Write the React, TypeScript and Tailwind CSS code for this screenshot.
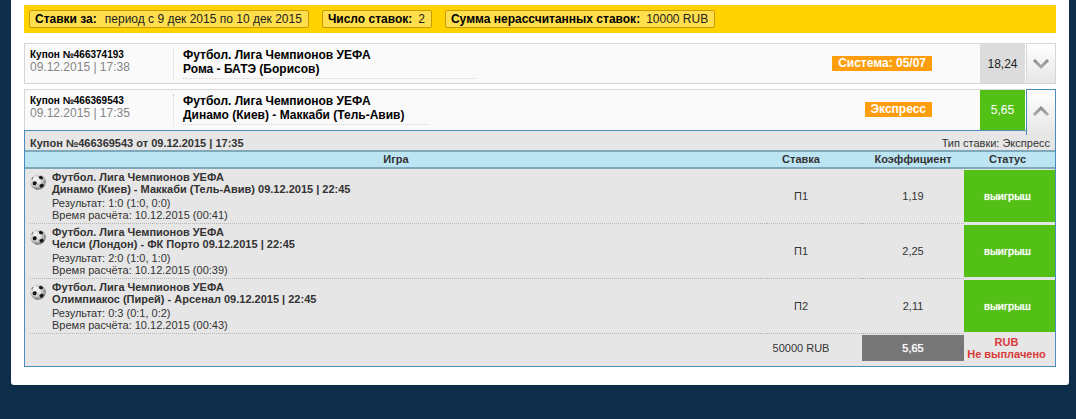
import React from 'react';

type Bet = {
  id: number;
  league: string;
  match: string;
  result: string;
  settled: string;
  pick: string;
  odds: string;
  status: string;
};

const summary = [
  { label: 'Ставки за:', value: 'период с 9 дек 2015 по 10 дек 2015', gap: 'gap-2' },
  { label: 'Число ставок:', value: '2', gap: 'gap-1.5' },
  { label: 'Сумма нерассчитанных ставок:', value: '10000 RUB', gap: 'gap-1.5' },
];

const bets: Bet[] = [
  {
    id: 1,
    league: 'Футбол. Лига Чемпионов УЕФА',
    match: 'Динамо (Киев) - Маккаби (Тель-Авив) 09.12.2015 | 22:45',
    result: 'Результат: 1:0 (1:0, 0:0)',
    settled: 'Время расчёта: 10.12.2015 (00:41)',
    pick: 'П1',
    odds: '1,19',
    status: 'выигрыш',
  },
  {
    id: 2,
    league: 'Футбол. Лига Чемпионов УЕФА',
    match: 'Челси (Лондон) - ФК Порто 09.12.2015 | 22:45',
    result: 'Результат: 2:0 (1:0, 1:0)',
    settled: 'Время расчёта: 10.12.2015 (00:39)',
    pick: 'П1',
    odds: '2,25',
    status: 'выигрыш',
  },
  {
    id: 3,
    league: 'Футбол. Лига Чемпионов УЕФА',
    match: 'Олимпиакос (Пирей) - Арсенал 09.12.2015 | 22:45',
    result: 'Результат: 0:3 (0:1, 0:2)',
    settled: 'Время расчёта: 10.12.2015 (00:43)',
    pick: 'П2',
    odds: '2,11',
    status: 'выигрыш',
  },
];

const BallIcon: React.FC = () => (
  <svg width="16" height="16" viewBox="0 0 16 16" className="mt-[3px] shrink-0" aria-hidden="true">
    <defs>
      <radialGradient id="ball" cx="0.4" cy="0.36" r="0.68">
        <stop offset="0" stopColor="#ffffff" />
        <stop offset="0.55" stopColor="#d8d8d8" />
        <stop offset="1" stopColor="#6e6e6e" />
      </radialGradient>
    </defs>
    <circle cx="8" cy="8" r="7.8" fill="url(#ball)" />
    <path
      d="M8.9 4.4 6 7.4M6.7 9.8l2.9 1.6M12 5.8 12.2 9.8M4 11.2 5 14M9.8 13 8 14.6M3.4 7.6 2.2 5.4M8.8 2.8 5.8 1.4"
      stroke="#a3a3a3"
      strokeWidth="0.6"
      fill="none"
    />
    <g fill="#161616">
      <path d="M8.7 2.6 11 1.8 13.2 3.4 12.4 5.6 9.6 5Z" />
      <path d="M2.6 8.2 5.2 7 7 8.8 5.8 11.3 3 11Z" />
      <path d="M9.4 11 12 9.6 13.8 11 12.8 13.2 10.2 13.6Z" />
    </g>
    <path d="M1 5.6 2.2 3.4 3.6 2.4 2.8 4.8ZM5 14 7.6 14.4 8.2 15.6 5.8 15.2ZM14.4 6 15.4 7 15.4 8.8 14.6 8Z" fill="#6a6a6a" />
  </svg>
);

const Chevron: React.FC<{ open: boolean }> = ({ open }) => (
  <svg width="18" height="12" viewBox="0 0 18 12" fill="none" aria-hidden="true">
    <defs>
      <linearGradient id="chevron" x1="0" y1="0" x2="0" y2="12" gradientUnits="userSpaceOnUse">
        <stop offset="0" stopColor="#858585" />
        <stop offset="1" stopColor="#b4b4b4" />
      </linearGradient>
    </defs>
    <path
      d={open ? 'M2 10 9 3 16 10' : 'M2 2 9 9 16 2'}
      stroke="url(#chevron)"
      strokeWidth="3"
    />
  </svg>
);

type CouponRowProps = {
  number: string;
  date: string;
  league: string;
  match: string;
  type: string;
  odds: string;
  open: boolean;
};

const CouponRow: React.FC<CouponRowProps> = ({ number, date, league, match, type, odds, open }) => (
  <div className={`flex h-[41px] ${open ? '' : 'border-b border-[#d6d6d6]'}`}>
    <div className="flex flex-1 items-stretch border-t border-l border-[#d6d6d6] bg-[#fafafa]">
      <div className="my-1 w-[149px] shrink-0 border-r border-dotted border-[#d4d4d4] pt-px pl-[5px]">
        <p className="text-[10px] leading-3 font-bold text-black">Купон №{number}</p>
        <p className="text-xs leading-3 text-[#858585]">{date}</p>
      </div>
      <div className="pt-1 pl-[9px]">
        <div
          className={`border-b border-dotted border-[#d4d4d4] pb-0.5 text-xs leading-[14px] font-bold text-black ${
            open ? 'w-[245px]' : 'w-[293px]'
          }`}
        >
          <p>{league}</p>
          <p>{match}</p>
        </div>
      </div>
      <div className="mr-12 ml-auto pt-3">
        <span className="block bg-[#ff9e0d] px-1.5 text-xs leading-[15px] font-bold text-white">{type}</span>
      </div>
      <div
        className={`flex w-[45px] items-center justify-center text-xs ${
          open ? 'bg-[#53c015] text-white' : 'bg-[#dcdcdc] text-[#222]'
        }`}
      >
        {odds}
      </div>
    </div>
    <button
      type="button"
      aria-expanded={open}
      aria-label={`Купон №${number}`}
      className={`ml-px flex w-[30px] shrink-0 items-center justify-center border-x border-t bg-linear-to-b from-white to-[#e6e6e6] ${
        open ? 'relative z-10 h-[46px] border-[#4b8dbb] pb-1' : 'border-[#d6d6d6]'
      }`}
    >
      <Chevron open={open} />
    </button>
  </div>
);

const CouponDetails: React.FC = () => (
  <div className="border border-[#4b8dbb] bg-[#e6e6e6] text-[11px] leading-3 text-[#333]">
    <div className="flex h-[19px] items-end justify-between px-[5px] pb-px">
      <h2 className="font-bold">Купон №466369543 от 09.12.2015 | 17:35</h2>
      <p>Тип ставки: Экспресс</p>
    </div>
    <table className="w-full table-fixed border-separate border-spacing-0">
      <colgroup>
        <col />
        <col className="w-[95px]" />
        <col className="w-[102px]" />
        <col className="w-[91px]" />
      </colgroup>
      <thead>
        <tr className="bg-[#bde4f3] leading-[15px]">
          <th className="border-y-2 border-[#7fa9ba] p-0">Игра</th>
          <th className="border-y-2 border-[#7fa9ba] p-0 pr-[27px]">Ставка</th>
          <th className="border-y-2 border-[#7fa9ba] p-0">Коэффициент</th>
          <th className="border-y-2 border-[#7fa9ba] p-0 pr-1">Статус</th>
        </tr>
      </thead>
      <tbody>
        {bets.map((bet) => (
          <tr key={bet.id} className="text-center">
            <td className="p-0 pl-[5px] text-left">
              <div className="flex gap-1.5 border-b border-dotted border-[#b5b5b5] py-0.5">
                <BallIcon />
                <div>
                  <p className="font-bold">{bet.league}</p>
                  <p className="mb-0.5 font-bold">{bet.match}</p>
                  <p>{bet.result}</p>
                  <p>{bet.settled}</p>
                </div>
              </div>
            </td>
            <td className="border-b border-dotted border-[#b5b5b5] p-0 pr-[27px]">{bet.pick}</td>
            <td className="border-b border-dotted border-[#b5b5b5] p-0">{bet.odds}</td>
            <td className="p-0 align-top">
              <div className="mt-px flex h-[52px] items-center justify-center bg-[#53c015] pr-1 text-white text-shadow-[0_0_1px_#fff]">
                {bet.status}
              </div>
            </td>
          </tr>
        ))}
      </tbody>
      <tfoot>
        <tr className="text-center">
          <td className="p-0" />
          <td className="p-0 pr-[27px] whitespace-nowrap">50000 RUB</td>
          <td className="p-0 pt-px">
            <div className="bg-[#777] py-[7px] text-white text-shadow-[0_0_1px_#fff]">5,65</div>
          </td>
          <td className="p-0 pr-1.5 font-bold whitespace-nowrap text-[#d93a3a]">
            <p>RUB</p>
            <p>Не выплачено</p>
          </td>
        </tr>
      </tfoot>
    </table>
    <div className="h-[5px]" />
  </div>
);

const App: React.FC = () => {
  return (
    <div className="min-h-screen bg-[#0d2d49] pr-[7px] pl-[11px] font-['Liberation_Sans',Arial,sans-serif]">
      <main className="rounded-b-[3px] bg-white px-[13px] pt-[5px] pb-[18px]">
        <div className="flex flex-wrap gap-[13px] bg-[#ffd200] p-[5px] text-xs leading-4">
          {summary.map((item) => (
            <p
              key={item.label}
              className={`flex rounded-xs border border-[#c79c00] bg-[#ffdf4d] pr-1.5 pl-[5px] text-[#222] ${item.gap}`}
            >
              <strong className="text-black">{item.label}</strong>
              <span>{item.value}</span>
            </p>
          ))}
        </div>

        <section className="mt-[10px]">
          <CouponRow
            number="466374193"
            date="09.12.2015 | 17:38"
            league="Футбол. Лига Чемпионов УЕФА"
            match="Рома - БАТЭ (Борисов)"
            type="Система: 05/07"
            odds="18,24"
            open={false}
          />
        </section>

        <section className="mt-[5px]">
          <CouponRow
            number="466369543"
            date="09.12.2015 | 17:35"
            league="Футбол. Лига Чемпионов УЕФА"
            match="Динамо (Киев) - Маккаби (Тель-Авив)"
            type="Экспресс"
            odds="5,65"
            open
          />
          <CouponDetails />
        </section>
      </main>
    </div>
  );
};

export default App;
